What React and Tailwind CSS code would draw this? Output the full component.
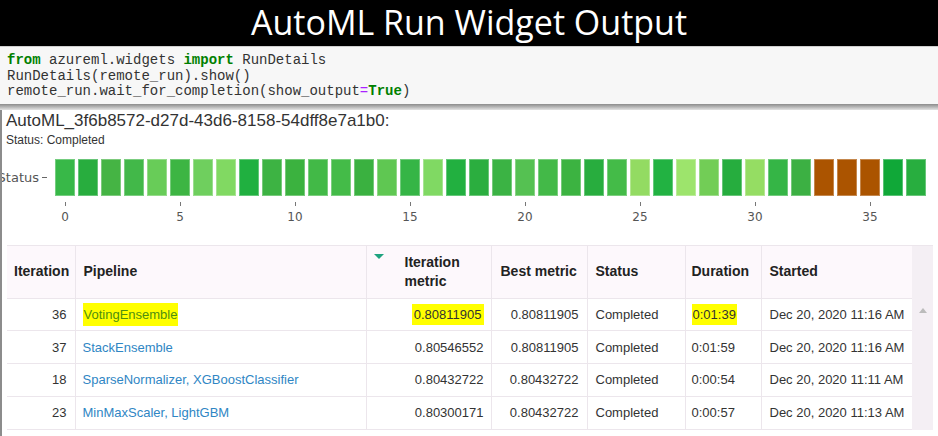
import React from 'react';

const CELLS = [
  '#38b848', '#28ad3e', '#45b444', '#42b849', '#68cc58', '#3db543', '#6fcf5e', '#81d962',
  '#20b040', '#3db343', '#3bb23f', '#42b947', '#44bb48', '#3ab140', '#5fc752', '#35b546',
  '#80d963', '#22b040', '#2bae3f', '#3bb344', '#55c152', '#43b948', '#3cb341', '#28ad3e',
  '#44bb48', '#93db62', '#22b242', '#9de46c', '#72cd56', '#26ad3e', '#95dd63', '#35b546',
  '#3cb043', '#ab5400', '#ab5400', '#ab5400', '#10a838', '#28ae3f',
];

const ROWS = [
  { it: 36, pipe: 'VotingEnsemble', metric: '0.80811905', best: '0.80811905', dur: '0:01:39', started: 'Dec 20, 2020 11:16 AM', hl: true },
  { it: 37, pipe: 'StackEnsemble', metric: '0.80546552', best: '0.80811905', dur: '0:01:59', started: 'Dec 20, 2020 11:16 AM' },
  { it: 18, pipe: 'SparseNormalizer, XGBoostClassifier', metric: '0.80432722', best: '0.80432722', dur: '0:00:54', started: 'Dec 20, 2020 11:11 AM' },
  { it: 23, pipe: 'MinMaxScaler, LightGBM', metric: '0.80300171', best: '0.80432722', dur: '0:00:57', started: 'Dec 20, 2020 11:13 AM' },
];

function Kw({ children }) {
  return <span className="font-bold text-[#008000]">{children}</span>;
}

export default function App() {
  return (
    <div className="w-[938px] h-[436px] overflow-hidden bg-white text-[#333]" style={{ fontFamily: '"Liberation Sans", Arial, sans-serif' }}>
      {/* title bar */}
      <div className="h-[46px] bg-black flex items-center justify-center">
        <span className="text-white text-[34px] leading-none pb-[2px]" style={{ fontFamily: '"Open Sans", "Noto Sans", sans-serif' }}>
          AutoML Run Widget Output
        </span>
      </div>

      {/* code cell */}
      <div className="h-[58px] bg-[#f7f7f7] border-t border-[#cfcfcf] pl-[7px] pt-[6px] text-[14px] leading-[15.5px] text-[#333] whitespace-pre" style={{ fontFamily: '"Liberation Mono", "Courier New", monospace' }}>
        <div><Kw>from</Kw> azureml.widgets <Kw>import</Kw> RunDetails</div>
        <div>RunDetails(remote_run).show()</div>
        <div>remote_run.wait_for_completion(show_output<span className="text-[#aa22ff]">=</span><Kw>True</Kw>)</div>
      </div>
      <div className="h-[6px] bg-linear-to-b from-[#8c8c8c] to-[#e4e4e4]" />

      {/* output */}
      <div className="border-l-2 border-[#8c8c8c] h-[326px]">
        <div className="pl-[4px] pt-[2px] text-[17px] leading-[18px] text-[#333]">AutoML_3f6b8572-d27d-43d6-8158-54dff8e7a1b0:</div>
        <div className="pl-[4px] pt-[3px] text-[12px] leading-[14px] text-[#333]">Status: Completed</div>

        {/* status chart */}
        <div className="flex items-center mt-[12px]">
          <div className="w-[53px] h-[37px] flex items-center justify-end overflow-hidden pr-[8px]" style={{ fontFamily: '"DejaVu Sans", sans-serif' }}>
            <span className="text-[13px] text-[#555] whitespace-nowrap shrink-0">Status</span>
            <span className="ml-[3px] w-[5px] h-px bg-[#666] shrink-0" />
          </div>
          <div className="flex gap-[3px]">
            {CELLS.map((c, i) => (
              <div key={i} className="w-[20px] h-[37px] border border-white/30" style={{ backgroundColor: c }} />
            ))}
          </div>
        </div>
        <div className="flex mt-[6px]" style={{ fontFamily: '"DejaVu Sans", sans-serif' }}>
          <div className="w-[53px]" />
          <div className="flex gap-[3px]">
            {CELLS.map((_, i) => (
              <div key={i} className="w-[20px] flex flex-col items-center">
                {i % 5 === 0 ? (
                  <>
                    <span className="w-px h-[4px] bg-[#777]" />
                    <span className="mt-[4px] text-[12px] leading-[14px] text-[#555] whitespace-nowrap">{i}</span>
                  </>
                ) : null}
              </div>
            ))}
          </div>
        </div>

        {/* table */}
        <div className="ml-[5px] mt-[21px] w-[926px] flex border-t border-[#ece6ec]">
          <table className="table-fixed border-collapse w-[905px] text-[13px]">
            <colgroup>
              <col className="w-[68px]" />
              <col className="w-[291px]" />
              <col className="w-[125px]" />
              <col className="w-[96px]" />
              <col className="w-[98px]" />
              <col className="w-[76px]" />
              <col className="w-[151px]" />
            </colgroup>
            <thead>
              <tr className="h-[52px] bg-[#fdf8fc] text-[14px] font-bold text-[#222] leading-[19px]">
                <th className="text-left pl-[7px] border-r border-b border-[#ece6ec]">Iteration</th>
                <th className="text-left pl-[8px] border-r border-b border-[#ece6ec]">Pipeline</th>
                <th className="relative text-left pl-[38px] border-r border-b border-[#ece6ec]">
                  <span className="absolute left-[7px] top-[8px] w-0 h-0 border-l-[5px] border-r-[5px] border-t-[5px] border-l-transparent border-r-transparent border-t-[#1fa37f]" />
                  Iteration<br />metric
                </th>
                <th className="text-left pl-[9px] border-r border-b border-[#ece6ec]">Best metric</th>
                <th className="text-left pl-[8px] border-r border-b border-[#ece6ec]">Status</th>
                <th className="text-left pl-[6px] border-r border-b border-[#ece6ec]">Duration</th>
                <th className="text-left pl-[8px] border-b border-[#ece6ec]">Started</th>
              </tr>
            </thead>
            <tbody>
              {ROWS.map((r) => (
                <tr key={r.it} className="h-[32.7px] border-b border-[#ece6ec]">
                  <td className="text-right pr-[8px] border-r border-[#ece6ec]">{r.it}</td>
                  <td className="pl-[7px] border-r border-[#ece6ec]">
                    {r.hl ? (
                      <span className="bg-[#ffff00] text-[#4f8f10] px-[1px] py-[4px]">{r.pipe}</span>
                    ) : (
                      <span className="text-[#2f86c4]">{r.pipe}</span>
                    )}
                  </td>
                  <td className="text-right pr-[7px] border-r border-[#ece6ec]">
                    {r.hl ? <span className="bg-[#ffff00] px-[2px] py-[3px]">{r.metric}</span> : r.metric}
                  </td>
                  <td className="text-right pr-[8px] border-r border-[#ece6ec]">{r.best}</td>
                  <td className="pl-[8px] border-r border-[#ece6ec]">Completed</td>
                  <td className="pl-[6px] border-r border-[#ece6ec]">
                    {r.hl ? <span className="bg-[#ffff00] px-[1px] py-[3px]">{r.dur}</span> : r.dur}
                  </td>
                  <td className="pl-[8px]">{r.started}</td>
                </tr>
              ))}
            </tbody>
          </table>
          <div className="w-[21px] h-[184px] bg-[#f4eff4] flex justify-center pt-[62px]">
            <span className="w-0 h-0 border-l-[4px] border-r-[4px] border-b-[5px] border-l-transparent border-r-transparent border-b-[#bbb]" />
          </div>
        </div>
      </div>
    </div>
  );
}
